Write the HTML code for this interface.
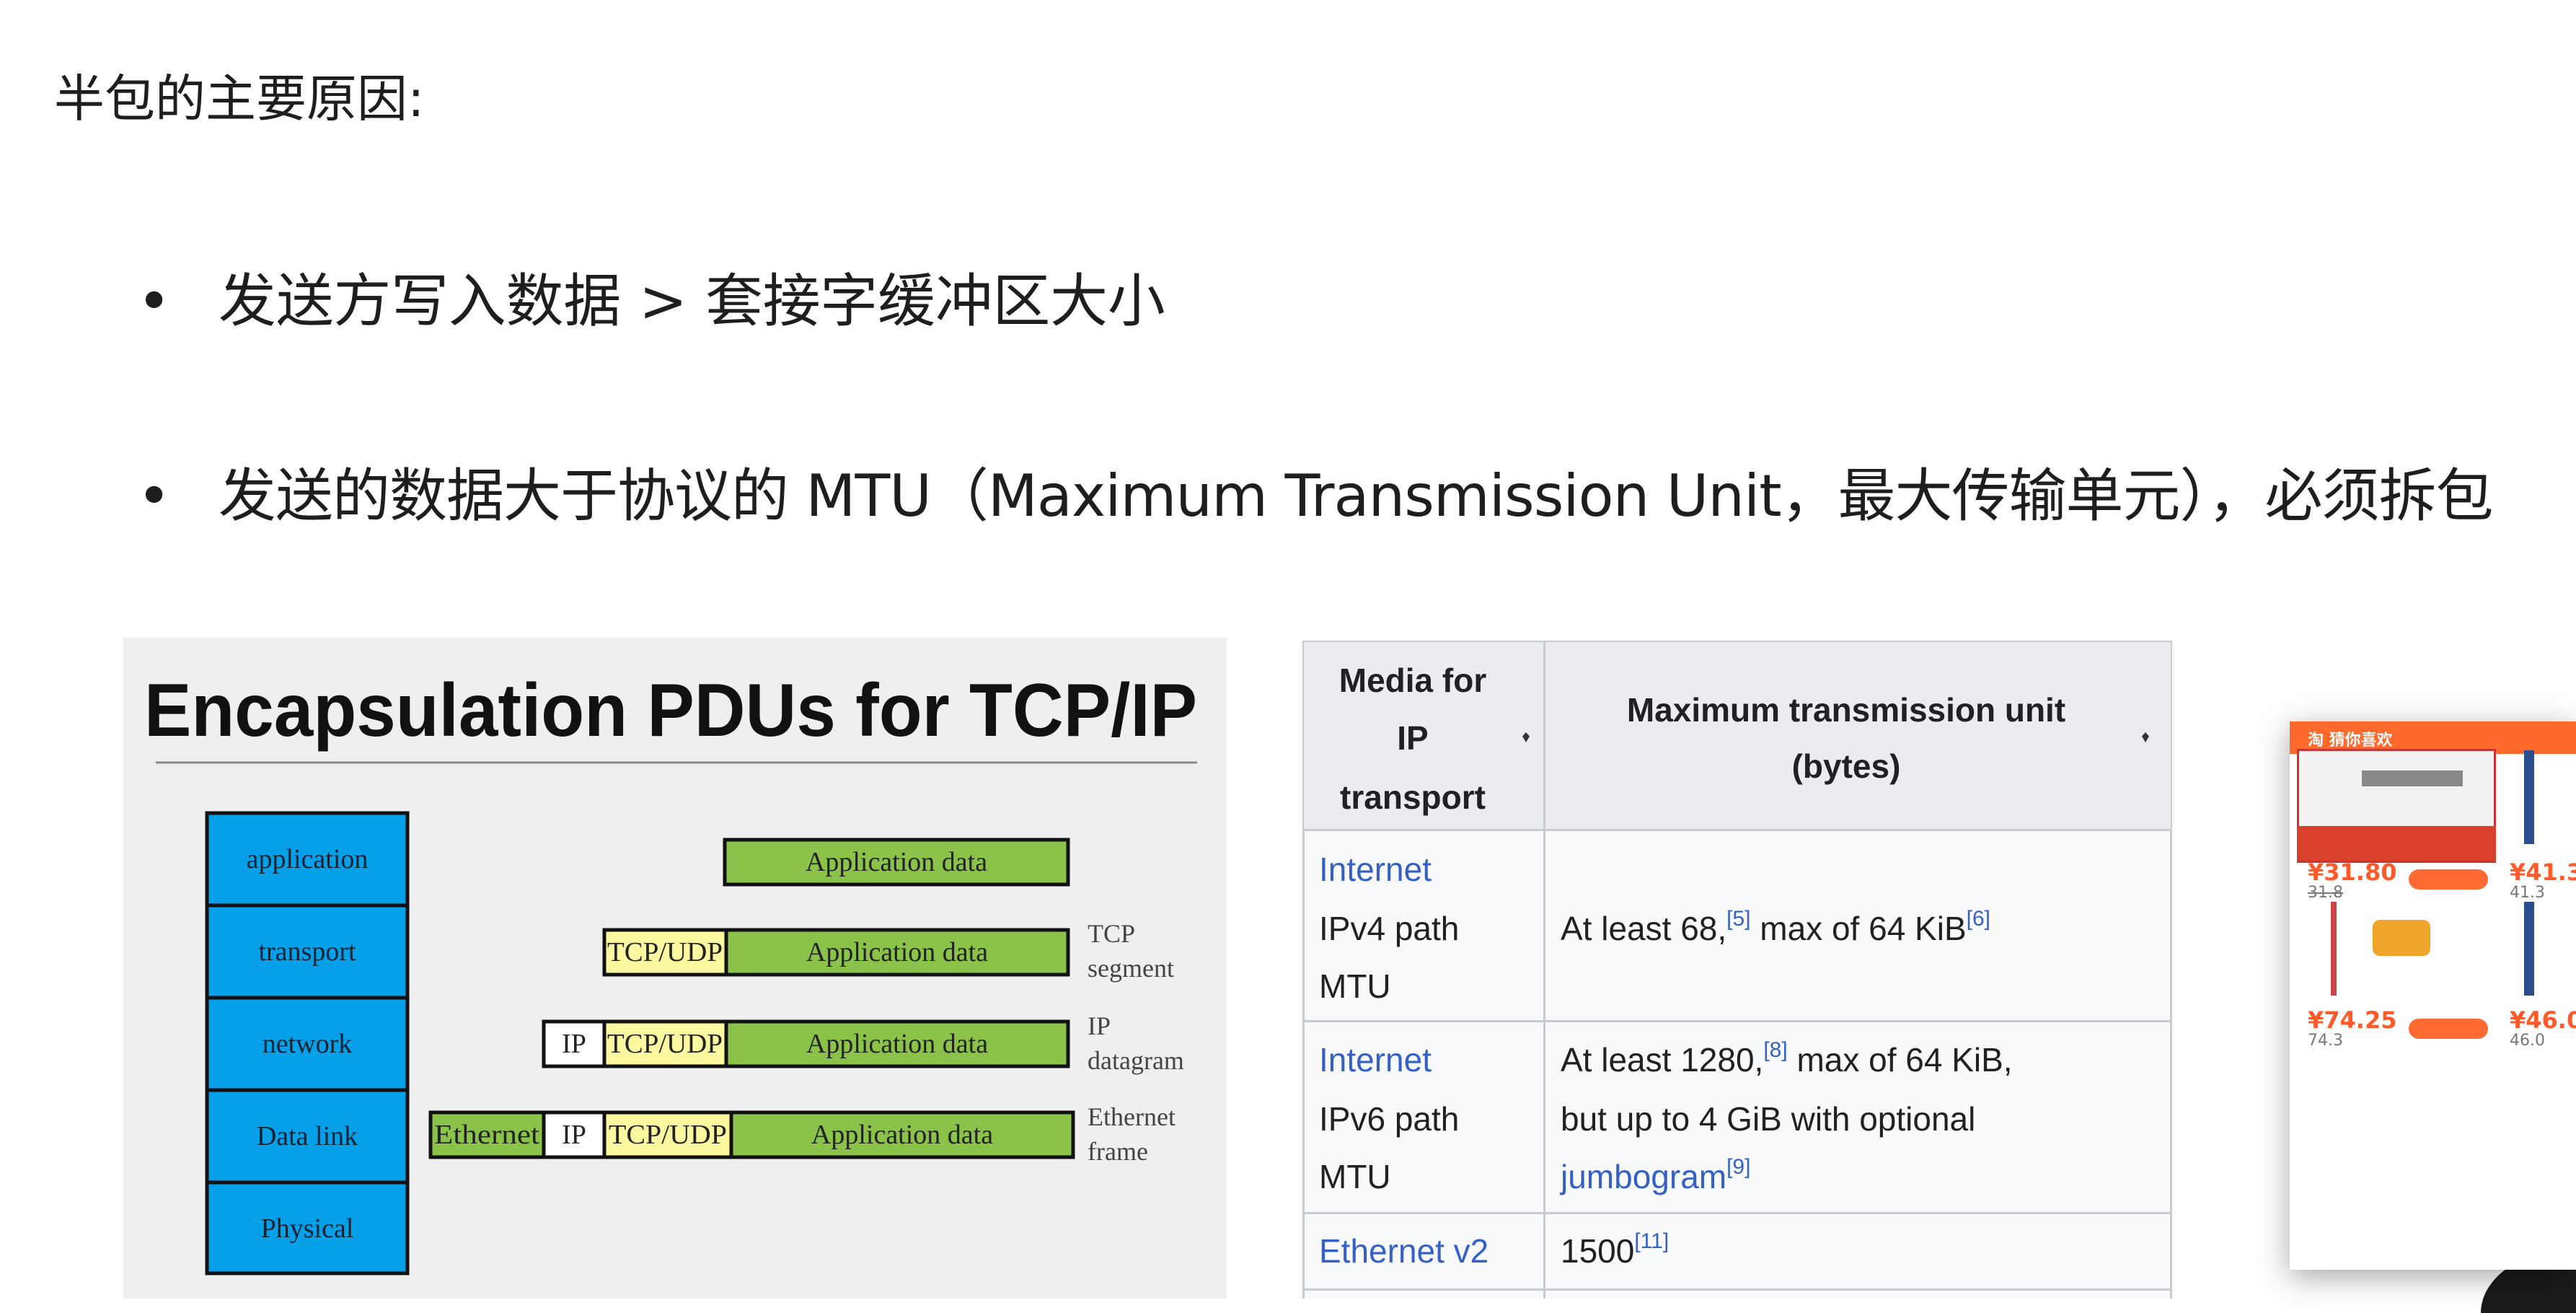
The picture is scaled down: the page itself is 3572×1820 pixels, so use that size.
<!DOCTYPE html>
<html><head><meta charset="utf-8">
<style>
html,body{margin:0;padding:0;width:3572px;height:1820px;overflow:hidden;}
#w{width:3572px;height:1820px;background:#fff;position:relative;overflow:hidden;font-family:"DejaVu Sans","Noto Sans CJK SC",sans-serif;color:#1e1e1e;}
.abs{position:absolute;white-space:nowrap;}
.t{font-family:"Liberation Sans","DejaVu Sans",sans-serif;font-size:46px;color:#202122;line-height:82px;}
.b{font-weight:bold;}
.lk{color:#3661c4;}
sup{font-size:30px;color:#3661c4;vertical-align:0;position:relative;top:-20px;}
</style></head><body><div id="w">
<div class="abs" style="left:75px;top:92px;font-size:70px;line-height:90px;">半包的主要原因:</div>
<div class="abs" style="left:190px;top:370px;font-size:80px;line-height:96px;">•</div>
<div class="abs" style="left:303px;top:370px;font-size:80px;line-height:96px;letter-spacing:-0.3px;">发送方写入数据 &gt; 套接字缓冲区大小</div>
<div class="abs" style="left:190px;top:640px;font-size:80px;line-height:96px;">•</div>
<div class="abs" style="left:303px;top:640px;font-size:80px;line-height:96px;letter-spacing:-1px;">发送的数据大于协议的 MTU（Maximum Transmission Unit，最大传输单元），必须拆包</div>

<svg class="abs" style="left:171px;top:884px" width="1530" height="916" viewBox="171 884 1530 916">
<rect x="171" y="884" width="1530" height="916" fill="#efefef"/>
<text x="200" y="1020" font-family="Liberation Sans,sans-serif" font-weight="bold" font-size="104" textLength="1460" lengthAdjust="spacingAndGlyphs" fill="#111">Encapsulation PDUs for TCP/IP</text>
<line x1="216" y1="1057" x2="1660" y2="1057" stroke="#888" stroke-width="3"/>
<g stroke="#111" stroke-width="5" fill="#05a0e8">
<rect x="287" y="1127" width="278" height="128"/>
<rect x="287" y="1255" width="278" height="128"/>
<rect x="287" y="1383" width="278" height="128"/>
<rect x="287" y="1511" width="278" height="128"/>
<rect x="287" y="1639" width="278" height="126"/>
</g>
<g font-family="Liberation Serif,serif" font-size="38" fill="#123" text-anchor="middle">
<text x="426" y="1203">application</text>
<text x="426" y="1331">transport</text>
<text x="426" y="1459">network</text>
<text x="426" y="1587">Data link</text>
<text x="426" y="1715">Physical</text>
</g>
<g stroke="#111" stroke-width="5">
<rect x="1005" y="1164" width="476" height="62" fill="#8bc34a"/>
<rect x="838" y="1289" width="169" height="62" fill="#fbf8a0"/>
<rect x="1007" y="1289" width="474" height="62" fill="#8bc34a"/>
<rect x="754" y="1416" width="84" height="62" fill="#fff"/>
<rect x="838" y="1416" width="169" height="62" fill="#fbf8a0"/>
<rect x="1007" y="1416" width="474" height="62" fill="#8bc34a"/>
<rect x="597" y="1542" width="157" height="62" fill="#8bc34a"/>
<rect x="754" y="1542" width="84" height="62" fill="#fff"/>
<rect x="838" y="1542" width="176" height="62" fill="#fbf8a0"/>
<rect x="1014" y="1542" width="474" height="62" fill="#8bc34a"/>
</g>
<g font-family="Liberation Serif,serif" font-size="38" fill="#222" text-anchor="middle">
<text x="1243" y="1207">Application data</text>
<text x="1244" y="1332">Application data</text>
<text x="922" y="1332" textLength="160" lengthAdjust="spacingAndGlyphs">TCP/UDP</text>
<text x="796" y="1459">IP</text>
<text x="922" y="1459" textLength="160" lengthAdjust="spacingAndGlyphs">TCP/UDP</text>
<text x="1244" y="1459">Application data</text>
<text x="675" y="1585" textLength="146" lengthAdjust="spacingAndGlyphs">Ethernet</text>
<text x="796" y="1585">IP</text>
<text x="926" y="1585" textLength="164" lengthAdjust="spacingAndGlyphs">TCP/UDP</text>
<text x="1251" y="1585">Application data</text>
</g>
<g font-family="Liberation Serif,serif" font-size="36" fill="#444">
<text x="1508" y="1306">TCP</text><text x="1508" y="1354">segment</text>
<text x="1508" y="1434">IP</text><text x="1508" y="1482">datagram</text>
<text x="1508" y="1560">Ethernet</text><text x="1508" y="1608">frame</text>
</g>
</svg>

<div class="abs" style="left:1806px;top:888px;width:1206px;height:912px;background:#f8f9fa;border:3px solid #c8ccd1;border-bottom:none;box-sizing:border-box;"></div>
<div class="abs" style="left:1808px;top:890px;width:1202px;height:260px;background:#eaecf0;"></div>
<div class="abs" style="left:2140px;top:888px;width:3px;height:912px;background:#c8ccd1;"></div>
<div class="abs" style="left:1806px;top:1149px;width:1206px;height:3px;background:#c8ccd1;"></div>
<div class="abs" style="left:1806px;top:1414px;width:1206px;height:3px;background:#c8ccd1;"></div>
<div class="abs" style="left:1806px;top:1680px;width:1206px;height:3px;background:#c8ccd1;"></div>
<div class="abs" style="left:1806px;top:1786px;width:1206px;height:3px;background:#c8ccd1;"></div>

<div class="abs t b" style="left:1829px;top:902px;width:260px;text-align:center;">Media for</div>
<div class="abs t b" style="left:1829px;top:982px;width:260px;text-align:center;">IP</div>
<div class="abs t b" style="left:1829px;top:1064px;width:260px;text-align:center;">transport</div>
<div class="abs" style="left:2111px;top:1015px;width:10px;height:14px;background:#333;clip-path:polygon(50% 0,100% 40%,50% 100%,0 40%);"></div>
<div class="abs t b" style="left:2160px;top:943px;width:800px;text-align:center;">Maximum transmission unit</div>
<div class="abs t b" style="left:2160px;top:1021px;width:800px;text-align:center;">(bytes)</div>
<div class="abs" style="left:2970px;top:1015px;width:10px;height:14px;background:#333;clip-path:polygon(50% 0,100% 40%,50% 100%,0 40%);"></div>

<div class="abs t lk" style="left:1829px;top:1164px;">Internet</div>
<div class="abs t" style="left:1829px;top:1246px;">IPv4 path</div>
<div class="abs t" style="left:1829px;top:1326px;">MTU</div>
<div class="abs t" style="left:2164px;top:1246px;">At least 68,<sup>[5]</sup> max of 64 KiB<sup>[6]</sup></div>

<div class="abs t lk" style="left:1829px;top:1428px;">Internet</div>
<div class="abs t" style="left:1829px;top:1510px;">IPv6 path</div>
<div class="abs t" style="left:1829px;top:1590px;">MTU</div>
<div class="abs t" style="left:2164px;top:1428px;">At least 1280,<sup>[8]</sup> max of 64 KiB,</div>
<div class="abs t" style="left:2164px;top:1510px;">but up to 4 GiB with optional</div>
<div class="abs t" style="left:2164px;top:1590px;"><span class="lk">jumbogram</span><sup>[9]</sup></div>

<div class="abs t lk" style="left:1829px;top:1693px;">Ethernet v2</div>
<div class="abs t" style="left:2164px;top:1693px;">1500<sup>[11]</sup></div>

<div class="abs" style="left:3440px;top:1730px;width:132px;height:90px;border-top-left-radius:132px 90px;background:#1c1a1c;"></div>
<div class="abs" style="left:3175px;top:1000px;width:397px;height:760px;background:#fff;box-shadow:0 10px 40px rgba(0,0,0,0.35);"></div>
<div class="abs" style="left:3175px;top:1000px;width:397px;height:45px;background:#ff6a2c;"></div>
<div class="abs" style="left:3200px;top:1008px;font-size:22px;color:#fff;font-weight:bold;">淘 猜你喜欢</div>
<div class="abs" style="left:3185px;top:1038px;width:270px;height:152px;border:3px solid #c33;background:#f2f2f2;"></div>
<div class="abs" style="left:3185px;top:1145px;width:276px;height:48px;background:#d9412a;"></div>
<div class="abs" style="left:3275px;top:1068px;width:140px;height:22px;background:#888;"></div>
<div class="abs" style="left:3500px;top:1040px;width:14px;height:130px;background:#2b4d8c;"></div>
<div class="abs" style="left:3200px;top:1190px;font-size:32px;font-weight:bold;color:#ff5a2a;">¥31.80</div>
<div class="abs" style="left:3200px;top:1225px;font-size:22px;color:#777;text-decoration:line-through;">31.8</div>
<div class="abs" style="left:3340px;top:1205px;width:110px;height:28px;border-radius:14px;background:#ff6a33;"></div>
<div class="abs" style="left:3480px;top:1190px;font-size:32px;font-weight:bold;color:#ff5a2a;">¥41.30</div>
<div class="abs" style="left:3480px;top:1225px;font-size:22px;color:#777;">41.3</div>
<div class="abs" style="left:3232px;top:1250px;width:8px;height:130px;background:#c44;"></div>
<div class="abs" style="left:3290px;top:1275px;width:80px;height:50px;background:#f0a52a;border-radius:10px;"></div>
<div class="abs" style="left:3500px;top:1250px;width:14px;height:130px;background:#2b4d8c;"></div>
<div class="abs" style="left:3200px;top:1395px;font-size:32px;font-weight:bold;color:#ff5a2a;">¥74.25</div>
<div class="abs" style="left:3200px;top:1430px;font-size:22px;color:#777;">74.3</div>
<div class="abs" style="left:3340px;top:1412px;width:110px;height:28px;border-radius:14px;background:#ff6a33;"></div>
<div class="abs" style="left:3480px;top:1395px;font-size:32px;font-weight:bold;color:#ff5a2a;">¥46.02</div>
<div class="abs" style="left:3480px;top:1430px;font-size:22px;color:#777;">46.0</div>
</div></body></html>
